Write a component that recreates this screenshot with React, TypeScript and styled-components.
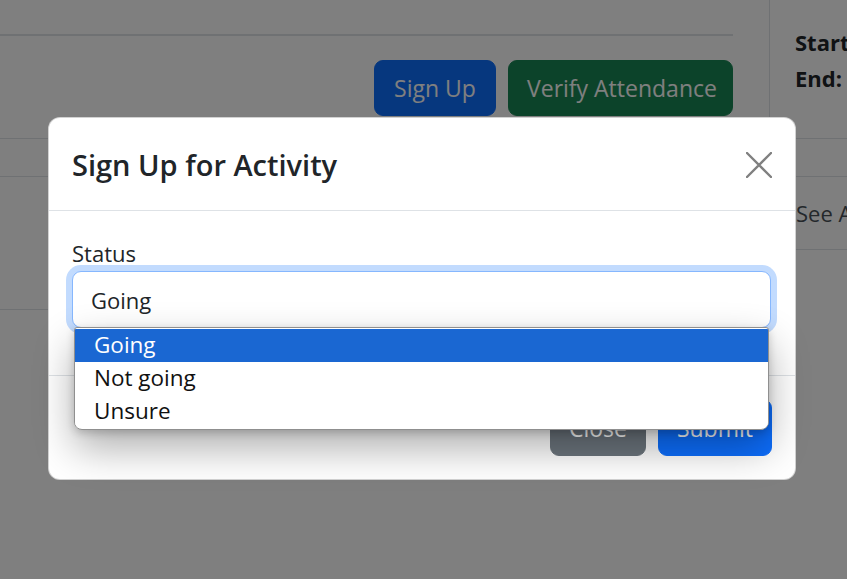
import React from "react";
import styled, { createGlobalStyle } from "styled-components";

const Global = createGlobalStyle`
  html, body { margin: 0; padding: 0; background: #ffffff; }
  body { font-family: "Open Sans", "Noto Sans", sans-serif; color: #212529; }
  * { box-sizing: border-box; }
`;

const Stage = styled.div`
  position: relative;
  width: 847px;
  height: 579px;
  overflow: hidden;
  background: #ffffff;
  font-size: 22px;
  line-height: 36px;
`;

/* ---------- page behind the backdrop ---------- */
const TopSection = styled.div`
  display: grid;
  grid-template-columns: 770px 1fr;
  height: 139px;
  border-bottom: 1.5px solid #dee2e6;
`;

const LeftPane = styled.div`
  border-right: 1.5px solid #dee2e6;
  padding-right: 36px;
  padding-top: 34px;
`;

const Rule = styled.div`
  height: 1.5px;
  background: #dee2e6;
`;

const ButtonRow = styled.div`
  display: flex;
  justify-content: flex-end;
  gap: 12px;
  margin-top: 24px;
`;

const Btn = styled.button<{ $bg: string }>`
  font-family: inherit;
  font-size: 23px;
  line-height: 36px;
  padding: 9px 18px;
  height: 56px;
  border: 1.5px solid ${(p) => p.$bg};
  border-radius: 9px;
  background: ${(p) => p.$bg};
  color: #ffffff;
  white-space: nowrap;
`;

const RightPane = styled.div`
  padding: 24px 0 0 25px;
  display: flex;
  flex-direction: column;
  font-weight: 700;
  white-space: nowrap;
`;

const Strip = styled.div`
  height: 38px;
  border-bottom: 1.5px solid #dee2e6;
`;

const BottomSection = styled.div`
  display: grid;
  grid-template-columns: 796px 1fr;
  align-items: start;
`;

const BottomLeft = styled.div`
  height: 133px;
  border-bottom: 1.5px solid #dee2e6;
`;

const BottomRight = styled.div`
  height: 73px;
  border-bottom: 1.5px solid #dee2e6;
  display: flex;
  align-items: center;
  color: #495057;
  white-space: nowrap;
`;

const Backdrop = styled.div`
  position: absolute;
  inset: 0;
  background: rgba(0, 0, 0, 0.5);
`;

/* ---------- modal ---------- */
const Modal = styled.div`
  position: absolute;
  left: 48px;
  top: 117px;
  width: 748px;
  background: #ffffff;
  border: 1px solid rgba(0, 0, 0, 0.175);
  border-radius: 12px;
  display: flex;
  flex-direction: column;
  overflow: visible;
`;

const Header = styled.div`
  display: flex;
  align-items: center;
  justify-content: space-between;
  padding: 24px 24px 23px 23px;
  border-bottom: 1.5px solid #dee2e6;
`;

const Title = styled.h5`
  margin: 0;
  font-size: 29px;
  font-weight: 600;
  line-height: 45px;
  color: #212529;
`;

const CloseX = styled.button`
  width: 36px;
  height: 36px;
  margin-right: -6px;
  padding: 0;
  border: 0;
  background: transparent;
  display: flex;
  align-items: center;
  justify-content: center;
`;

const Body = styled.div`
  padding: 24px 24px 24px 23px;
  position: relative;
  z-index: 2;
`;

const FormGroup = styled.div`
  margin-bottom: 23px;
  position: relative;
`;

const Label = styled.label`
  display: block;
  margin: 0;
  font-size: 22px;
  line-height: 36px;
`;

const FieldWrap = styled.div`
  position: relative;
`;

const SelectBox = styled.div`
  height: 57px;
  padding: 9px 54px 9px 18px;
  border: 1.5px solid #86b7fe;
  border-radius: 9px;
  box-shadow: 0 0 0 6px #c2dbfe;
  font-size: 22px;
  line-height: 36px;
  display: flex;
  align-items: center;
  background: #ffffff;
  color: #212529;
`;

const Popup = styled.ul`
  position: absolute;
  top: 56px;
  left: 2px;
  right: 2px;
  margin: 0;
  padding: 1px 0;
  list-style: none;
  background: #ffffff;
  border: 1px solid #8f8f8f;
  border-radius: 3px 3px 8px 8px;
  box-shadow: 0 18px 40px rgba(0, 0, 0, 0.32), 0 3px 8px rgba(0, 0, 0, 0.18);
  overflow: hidden;
  z-index: 2;
`;

const Option = styled.li<{ $active?: boolean }>`
  height: 33px;
  padding-left: 19px;
  font-size: 22.5px;
  line-height: 32px;
  background: ${(p) => (p.$active ? "#1a67d2" : "#ffffff")};
  color: ${(p) => (p.$active ? "#ffffff" : "#111111")};
`;

const Footer = styled.div`
  display: flex;
  justify-content: flex-end;
  gap: 12px;
  padding: 23px 23px 23px 18px;
  border-top: 1.5px solid #dee2e6;
`;

const FootBtn = styled.button<{ $bg: string }>`
  font-family: inherit;
  font-size: 23px;
  line-height: 36px;
  height: 57px;
  padding: 9px 18px;
  border: 1.5px solid ${(p) => p.$bg};
  border-radius: 9px;
  background: ${(p) => p.$bg};
  color: #ffffff;
`;

export default function App() {
  return (
    <>
      <Global />
      <Stage>
        <TopSection>
          <LeftPane>
            <Rule />
            <ButtonRow>
              <Btn $bg="#0d6efd" style={{ width: 122 }}>Sign Up</Btn>
              <Btn $bg="#198754" style={{ width: 225 }}>Verify Attendance</Btn>
            </ButtonRow>
          </LeftPane>
          <RightPane>
            <span>Start:</span>
            <span>End:</span>
          </RightPane>
        </TopSection>
        <Strip />
        <BottomSection>
          <BottomLeft />
          <BottomRight>See All</BottomRight>
        </BottomSection>

        <Backdrop />

        <Modal>
          <Header>
            <Title>Sign Up for Activity</Title>
            <CloseX aria-label="Close">
              <svg width="26" height="26" viewBox="0 0 26 26">
                <path d="M1 1 L25 25 M25 1 L1 25" stroke="#808080" strokeWidth="2.4" strokeLinecap="round" />
              </svg>
            </CloseX>
          </Header>
          <Body>
            <FormGroup>
              <Label>Status</Label>
              <FieldWrap>
                <SelectBox>Going</SelectBox>
                <Popup>
                  <Option $active>Going</Option>
                  <Option>Not going</Option>
                  <Option>Unsure</Option>
                </Popup>
              </FieldWrap>
            </FormGroup>
          </Body>
          <Footer>
            <FootBtn $bg="#6c757d">Close</FootBtn>
            <FootBtn $bg="#0d6efd">Submit</FootBtn>
          </Footer>
        </Modal>
      </Stage>
    </>
  );
}
